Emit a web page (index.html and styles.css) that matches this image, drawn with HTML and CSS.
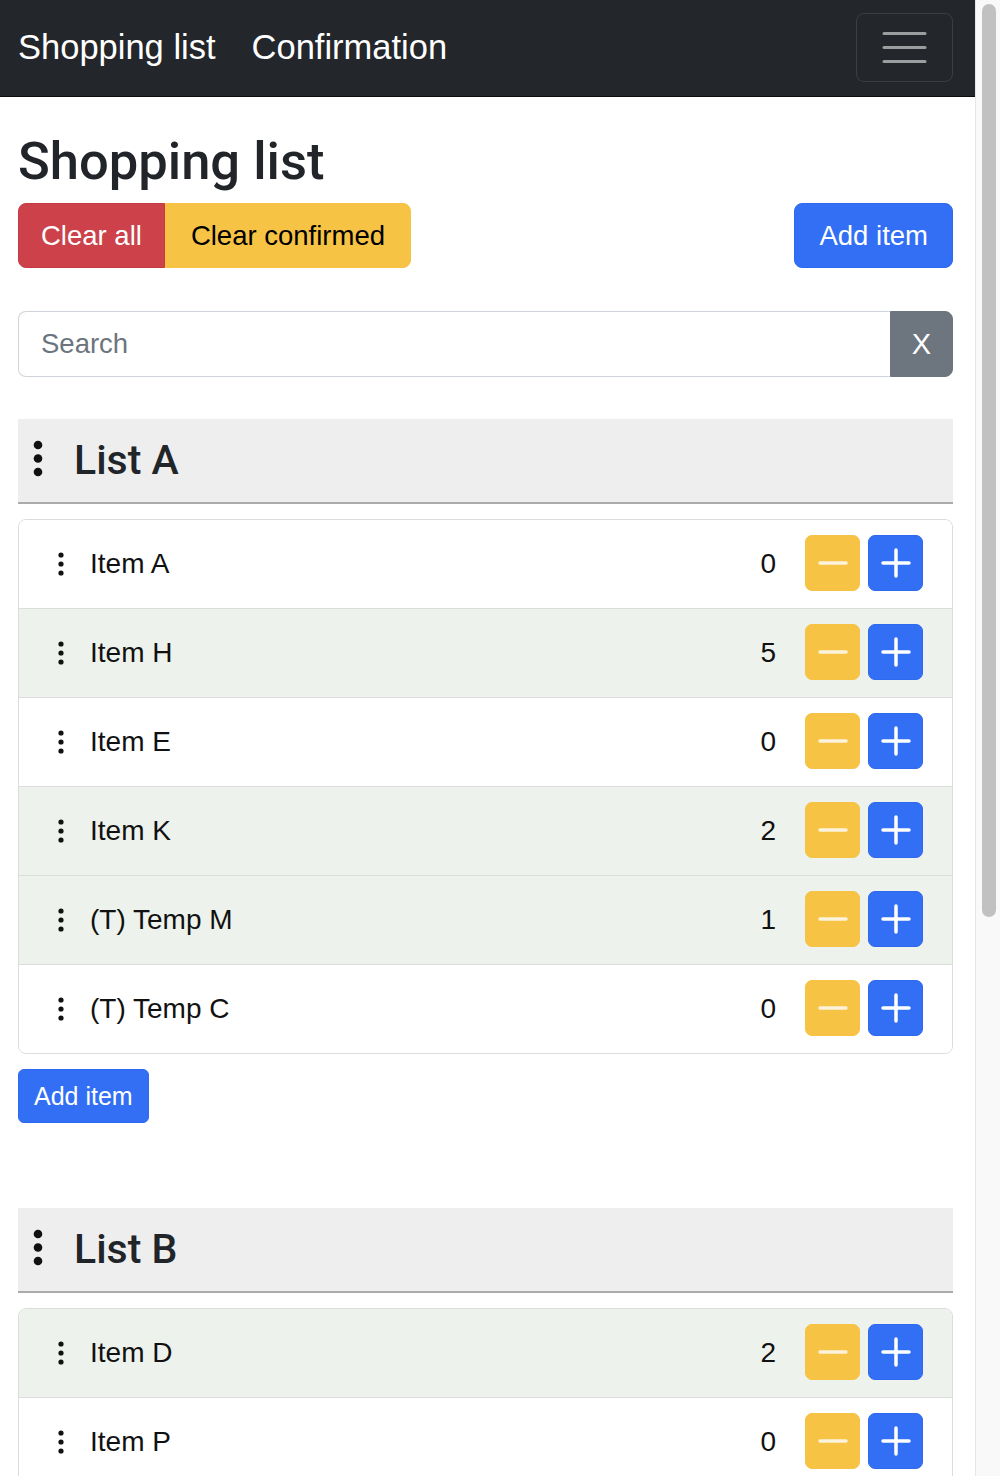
FILE: index.html
```html
<!DOCTYPE html>
<html lang="en">
<head>
<meta charset="utf-8">
<title>Shopping list</title>
<link rel="stylesheet" href="styles.css">
</head>
<body>
<div class="page">
  <div class="main">
    <nav class="navbar">
      <div class="nav-links">
        <a class="nav-link">Shopping list</a>
        <a class="nav-link">Confirmation</a>
      </div>
      <button class="toggler" aria-label="Toggle navigation">
        <svg width="45" height="33" viewBox="0 0 45 33"><g stroke="rgba(255,255,255,0.55)" stroke-width="3" stroke-linecap="round"><line x1="2" y1="2.5" x2="43" y2="2.5"/><line x1="2" y1="16.5" x2="43" y2="16.5"/><line x1="2" y1="30.5" x2="43" y2="30.5"/></g></svg>
      </button>
    </nav>

    <div class="container">
      <h1 class="title">Shopping list</h1>
      <div class="toolbar">
        <div class="btn-group">
          <button class="btn btn-danger">Clear all</button>
          <button class="btn btn-warning">Clear confirmed</button>
        </div>
        <button class="btn btn-primary btn-add">Add item</button>
      </div>

      <div class="search">
        <input class="search-input" type="text" placeholder="Search">
        <button class="search-clear">X</button>
      </div>

      <section class="list">
        <div class="list-header">
          <svg class="kebab-lg" width="10" height="38" viewBox="0 0 10 38"><circle cx="5" cy="5" r="4.3"/><circle cx="5" cy="18.5" r="4.3"/><circle cx="5" cy="32" r="4.3"/></svg>
          <h2 class="list-title">List A</h2>
        </div>
        <ul class="items">
          <li class="item"><svg class="kebab" width="8" height="26" viewBox="0 0 8 26"><circle cx="4" cy="4" r="2.6"/><circle cx="4" cy="13" r="2.6"/><circle cx="4" cy="22" r="2.6"/></svg><span class="item-name">Item A</span><span class="qty">0</span><button class="qbtn minus"><svg width="30" height="30" viewBox="0 0 30 30"><line x1="2" y1="15" x2="28" y2="15"/></svg></button><button class="qbtn plus"><svg width="30" height="30" viewBox="0 0 30 30"><line x1="2" y1="15" x2="28" y2="15"/><line x1="15" y1="2" x2="15" y2="28"/></svg></button></li>
          <li class="item done"><svg class="kebab" width="8" height="26" viewBox="0 0 8 26"><circle cx="4" cy="4" r="2.6"/><circle cx="4" cy="13" r="2.6"/><circle cx="4" cy="22" r="2.6"/></svg><span class="item-name">Item H</span><span class="qty">5</span><button class="qbtn minus"><svg width="30" height="30" viewBox="0 0 30 30"><line x1="2" y1="15" x2="28" y2="15"/></svg></button><button class="qbtn plus"><svg width="30" height="30" viewBox="0 0 30 30"><line x1="2" y1="15" x2="28" y2="15"/><line x1="15" y1="2" x2="15" y2="28"/></svg></button></li>
          <li class="item"><svg class="kebab" width="8" height="26" viewBox="0 0 8 26"><circle cx="4" cy="4" r="2.6"/><circle cx="4" cy="13" r="2.6"/><circle cx="4" cy="22" r="2.6"/></svg><span class="item-name">Item E</span><span class="qty">0</span><button class="qbtn minus"><svg width="30" height="30" viewBox="0 0 30 30"><line x1="2" y1="15" x2="28" y2="15"/></svg></button><button class="qbtn plus"><svg width="30" height="30" viewBox="0 0 30 30"><line x1="2" y1="15" x2="28" y2="15"/><line x1="15" y1="2" x2="15" y2="28"/></svg></button></li>
          <li class="item done"><svg class="kebab" width="8" height="26" viewBox="0 0 8 26"><circle cx="4" cy="4" r="2.6"/><circle cx="4" cy="13" r="2.6"/><circle cx="4" cy="22" r="2.6"/></svg><span class="item-name">Item K</span><span class="qty">2</span><button class="qbtn minus"><svg width="30" height="30" viewBox="0 0 30 30"><line x1="2" y1="15" x2="28" y2="15"/></svg></button><button class="qbtn plus"><svg width="30" height="30" viewBox="0 0 30 30"><line x1="2" y1="15" x2="28" y2="15"/><line x1="15" y1="2" x2="15" y2="28"/></svg></button></li>
          <li class="item done"><svg class="kebab" width="8" height="26" viewBox="0 0 8 26"><circle cx="4" cy="4" r="2.6"/><circle cx="4" cy="13" r="2.6"/><circle cx="4" cy="22" r="2.6"/></svg><span class="item-name">(T) Temp M</span><span class="qty">1</span><button class="qbtn minus"><svg width="30" height="30" viewBox="0 0 30 30"><line x1="2" y1="15" x2="28" y2="15"/></svg></button><button class="qbtn plus"><svg width="30" height="30" viewBox="0 0 30 30"><line x1="2" y1="15" x2="28" y2="15"/><line x1="15" y1="2" x2="15" y2="28"/></svg></button></li>
          <li class="item"><svg class="kebab" width="8" height="26" viewBox="0 0 8 26"><circle cx="4" cy="4" r="2.6"/><circle cx="4" cy="13" r="2.6"/><circle cx="4" cy="22" r="2.6"/></svg><span class="item-name">(T) Temp C</span><span class="qty">0</span><button class="qbtn minus"><svg width="30" height="30" viewBox="0 0 30 30"><line x1="2" y1="15" x2="28" y2="15"/></svg></button><button class="qbtn plus"><svg width="30" height="30" viewBox="0 0 30 30"><line x1="2" y1="15" x2="28" y2="15"/><line x1="15" y1="2" x2="15" y2="28"/></svg></button></li>
        </ul>
        <button class="btn btn-primary btn-sm">Add item</button>
      </section>

      <section class="list list-next">
        <div class="list-header">
          <svg class="kebab-lg" width="10" height="38" viewBox="0 0 10 38"><circle cx="5" cy="5" r="4.3"/><circle cx="5" cy="18.5" r="4.3"/><circle cx="5" cy="32" r="4.3"/></svg>
          <h2 class="list-title">List B</h2>
        </div>
        <ul class="items">
          <li class="item done"><svg class="kebab" width="8" height="26" viewBox="0 0 8 26"><circle cx="4" cy="4" r="2.6"/><circle cx="4" cy="13" r="2.6"/><circle cx="4" cy="22" r="2.6"/></svg><span class="item-name">Item D</span><span class="qty">2</span><button class="qbtn minus"><svg width="30" height="30" viewBox="0 0 30 30"><line x1="2" y1="15" x2="28" y2="15"/></svg></button><button class="qbtn plus"><svg width="30" height="30" viewBox="0 0 30 30"><line x1="2" y1="15" x2="28" y2="15"/><line x1="15" y1="2" x2="15" y2="28"/></svg></button></li>
          <li class="item"><svg class="kebab" width="8" height="26" viewBox="0 0 8 26"><circle cx="4" cy="4" r="2.6"/><circle cx="4" cy="13" r="2.6"/><circle cx="4" cy="22" r="2.6"/></svg><span class="item-name">Item P</span><span class="qty">0</span><button class="qbtn minus"><svg width="30" height="30" viewBox="0 0 30 30"><line x1="2" y1="15" x2="28" y2="15"/></svg></button><button class="qbtn plus"><svg width="30" height="30" viewBox="0 0 30 30"><line x1="2" y1="15" x2="28" y2="15"/><line x1="15" y1="2" x2="15" y2="28"/></svg></button></li>
        </ul>
      </section>
    </div>
  </div>
  <div class="scrollbar"><div class="thumb"></div></div>
</div>
</body>
</html>
```
FILE: styles.css
```css
* { box-sizing: border-box; }

html, body {
  margin: 0;
  padding: 0;
}

body {
  font-family: "Liberation Sans", Arial, sans-serif;
  color: #212529;
  background: #fff;
}

.page {
  display: flex;
  height: 1476px;
  overflow: hidden;
}

.main {
  flex: 1;
  min-width: 0;
}

/* Navbar */
.navbar {
  height: 97px;
  background: #23262a;
  border-bottom: 1px solid #0c0d0e;
  display: flex;
  align-items: center;
  justify-content: space-between;
  padding: 0 22px 0 18px;
}

.nav-links {
  display: flex;
  gap: 36px;
  padding-bottom: 1px;
}

.nav-link {
  color: #fff;
  font-size: 34.5px;
  line-height: 1;
  text-decoration: none;
}

.toggler {
  width: 97px;
  height: 69px;
  margin-top: -1px;
  border: 1px solid rgba(255, 255, 255, 0.11);
  border-radius: 8px;
  background: transparent;
  display: flex;
  align-items: center;
  justify-content: center;
  padding: 0;
}

/* Content */
.container {
  padding: 0 22px 0 18px;
}

.title {
  font-family: Roboto, "Liberation Sans", sans-serif;
  font-weight: 500;
  font-size: 52.5px;
  line-height: 64px;
  margin: 32px 0 10px;
  color: #212529;
}

.toolbar {
  display: flex;
  justify-content: space-between;
  align-items: center;
}

.btn-group {
  display: flex;
}

.btn {
  font-family: "Liberation Sans", Arial, sans-serif;
  font-size: 27.5px;
  height: 65px;
  padding: 0 22px;
  border: 1px solid transparent;
  border-radius: 8px;
  line-height: 1;
  cursor: pointer;
}

.btn-group .btn:first-child {
  border-top-right-radius: 0;
  border-bottom-right-radius: 0;
}

.btn-group .btn:last-child {
  border-top-left-radius: 0;
  border-bottom-left-radius: 0;
}

.btn-danger {
  background: #cc414a;
  border-color: #c63a43;
  color: #fff;
}

.btn-warning {
  background: #f6c344;
  border-color: #f6c344;
  color: #000;
  padding: 0 25px;
}

.btn-primary {
  background: #326ff4;
  border-color: #2f69ec;
  color: #fff;
}

.btn-add {
  padding: 0 24px;
}

.btn-sm {
  font-size: 25px;
  height: 54px;
  padding: 0 15px;
  border-radius: 6px;
  margin-top: 15px;
}

/* Search */
.search {
  display: flex;
  height: 66px;
  margin-top: 43px;
}

.search-input {
  flex: 1;
  min-width: 0;
  height: 66px;
  border: 1px solid #ced4da;
  border-right: none;
  border-radius: 8px 0 0 8px;
  padding: 0 22px;
  font-family: "Liberation Sans", Arial, sans-serif;
  font-size: 27.5px;
  color: #212529;
  outline: none;
}

.search-input::placeholder {
  color: #6c757d;
}

.search-clear {
  width: 63px;
  height: 66px;
  background: #6d757e;
  border: 1px solid #6d757e;
  border-radius: 0 8px 8px 0;
  color: #fff;
  font-family: "Liberation Sans", Arial, sans-serif;
  font-size: 29px;
  padding: 0;
}

/* Lists */
.list {
  margin-top: 42px;
}

.list-next {
  margin-top: 85px;
}

.list-header {
  height: 85px;
  background: #eeeeee;
  border-bottom: 2px solid #ababab;
  display: flex;
  align-items: center;
  padding-left: 15px;
  gap: 31px;
}

.kebab-lg {
  fill: #111;
  margin-top: -3px;
}

.list-title {
  font-family: Roboto, "Liberation Sans", sans-serif;
  font-weight: 500;
  font-size: 41px;
  line-height: 1;
  margin: 0;
  color: #212529;
}

.items {
  list-style: none;
  margin: 15px 0 0;
  padding: 0;
  border: 1px solid #dcdcdc;
  border-radius: 8px;
  overflow: hidden;
}

.item {
  height: 89px;
  display: flex;
  align-items: center;
  padding: 0 29px 0 38px;
  background: #fff;
  font-size: 28px;
  color: #111;
}

.item + .item {
  border-top: 1px solid #dcdcdc;
}

.item:first-child {
  height: 88px;
}

.item.done {
  background: #edf3ec;
}

.kebab {
  fill: #111;
  margin-right: 25px;
  margin-top: -1px;
}

.item-name {
  flex: 1;
}

.qty {
  margin-right: 29px;
}

.qbtn {
  width: 55px;
  height: 56px;
  margin-bottom: 3px;
  padding: 0;
  border-radius: 7px;
  display: flex;
  align-items: center;
  justify-content: center;
  border: 1px solid transparent;
}

.qbtn svg line {
  stroke: #fff;
  stroke-width: 3.5;
  stroke-linecap: round;
}

.minus {
  background: #f6c344;
  border-color: #f6c344;
}

.minus svg line {
  stroke: #fbf3dc;
}

.plus {
  background: #326ff4;
  border-color: #2f69ec;
  margin-left: 8px;
}

/* Scrollbar */
.scrollbar {
  width: 25px;
  height: 1476px;
  flex: none;
  background: #f9f9f9;
  border-left: 1px solid #e6e6e6;
  padding: 4px 0 0 6px;
}

.thumb {
  width: 14px;
  height: 913px;
  background: #c1c1c1;
  border-radius: 7px;
}
```
